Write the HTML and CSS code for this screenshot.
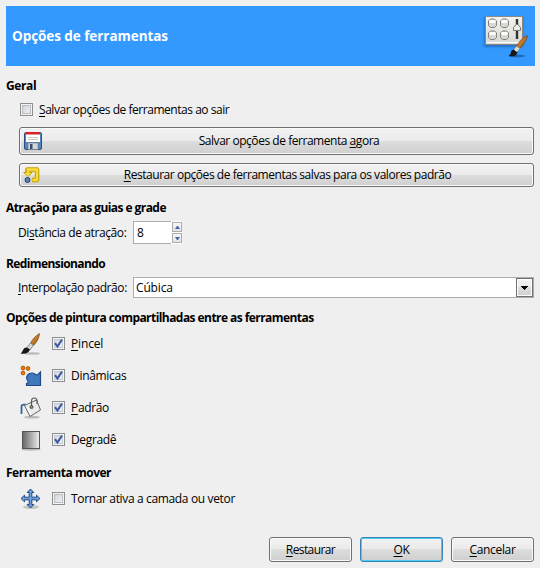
FILE: index.html
```html
<!DOCTYPE html>
<html lang="pt-BR">
<head>
<meta charset="utf-8">
<title>Opções de ferramentas</title>
<link rel="stylesheet" href="styles.css">
</head>
<body>
<main class="dialog">
  <header class="banner">
    <h1>Opções de ferramentas</h1>
    <svg class="banner-icon" width="48" height="48" viewBox="0 0 48 48">
      <defs>
        <linearGradient id="panel" x1="0" y1="0" x2="0" y2="1"><stop offset="0" stop-color="#f4f4f1"/><stop offset="1" stop-color="#d6d7d2"/></linearGradient>
        <linearGradient id="wood" x1="0" y1="0" x2="1" y2="1"><stop offset="0" stop-color="#f0a94e"/><stop offset="1" stop-color="#8f4a08"/></linearGradient>
        <filter id="soft"><feGaussianBlur stdDeviation="1"/></filter>
      </defs>
      <rect x="4" y="5" width="39" height="30" fill="#124b8b" opacity=".5" filter="url(#soft)"/>
      <rect x="5.500" y="4.500" width="37" height="28" fill="url(#panel)" stroke="#888a85"/>
      <path d="M6.500 30.500h35" stroke="#fff"/>
      <g fill="#d8d8d3" stroke="#80827c">
        <path d="M8.500 9l2-2h4l2 2v4.500l-2 2h-4l-2-2z"/>
        <path d="M20.500 9l2-2h4l2 2v4.500l-2 2h-4l-2-2z"/>
        <path d="M8.500 21l2-2h4l2 2v4.500l-2 2h-4l-2-2z"/>
        <path d="M20.500 21l2-2h4l2 2v4.500l-2 2h-4l-2-2z"/>
      </g>
      <path d="M9.500 9.500h6M21.500 9.500h6M9.500 21.500h6M21.500 21.500h6" stroke="#fff" stroke-width="3"/>
      <path d="M37 7v20" stroke="#303331" stroke-width="2.400"/>
      <path d="M33.500 18.500v-3l2.500-3h2l2.500 3v3z" fill="#eeeeec" stroke="#777973"/>
      <ellipse cx="37" cy="44" rx="8" ry="1.500" fill="#124b8b" opacity=".6"/>
      <path d="M47.500 23.500c-5 2-9 7-11 11l3 2c4-4 7-8 8-13z" fill="url(#wood)" stroke="#80430a" stroke-width=".8"/>
      <path d="M36.500 34l-3 4 3 2.500 3.500-4z" fill="#dfdfdc" stroke="#777" stroke-width=".7"/>
      <path d="M33.500 37.500c-4 1-1 4-5 6.500 5 1 8 0 9-3.500z" fill="#141716"/>
    </svg>
  </header>

  <h2 class="t-geral">Geral</h2>
  <label class="check-row check-top"><span class="box"></span><span class="t-save"><u>S</u>alvar opções de ferramentas ao sair</span></label>
  <button class="wide wide-save">
    <svg class="btn-icon" width="20" height="20" viewBox="0 0 20 20">
      <rect x="1.500" y="1.500" width="17" height="17" rx="1.500" fill="#5585c0" stroke="#2c4f83"/>
      <rect x="3" y="1" width="14" height="10" fill="#fff"/>
      <rect x="3" y="1" width="14" height="2.500" fill="#dc2028"/>
      <path d="M5 6.500h10M5 8.500h10" stroke="#c4c4c4"/>
      <rect x="5" y="12" width="10" height="6.500" fill="#d3d7cf" stroke="#6d7784" stroke-width=".6"/>
      <rect x="7" y="13" width="2.500" height="5" fill="#35506f"/>
    </svg>
    <span class="t-now">Salvar opções de ferramenta <u>a</u>gora</span>
  </button>
  <button class="wide wide-reset">
    <svg class="btn-icon" width="20" height="20" viewBox="0 0 20 20">
      <path d="M4.500 8V4.500h9.500v10.500H9" fill="none" stroke="#c4a000" stroke-width="4.600" stroke-linejoin="round"/>
      <path d="M.7 7.500h8.600L5 11.500z" fill="#fce94f" stroke="#c4a000" stroke-linejoin="round"/>
      <path d="M5 9V4.500h9V15H9.500" fill="none" stroke="#f7dc3e" stroke-width="2.400"/>
      <circle cx="4.500" cy="15" r="2.500" fill="#5b82b8" stroke="#253f6b"/>
    </svg>
    <span class="t-reset"><u>R</u>estaurar opções de ferramentas salvas para os valores padrão</span>
  </button>

  <h2 class="t-snap">Atração para as guias e grade</h2>
  <div class="field spin-row">
    <span class="label t-dist">Di<u>s</u>tância de atração:</span>
    <span class="spin"><span class="spin-value">8</span><span class="spin-buttons">
      <span class="step"><svg width="5" height="3" viewBox="0 0 5 3"><path d="M0 3L2 0h1l2 3z" fill="#4a63a6"/></svg></span>
      <span class="step"><svg width="5" height="3" viewBox="0 0 5 3"><path d="M0 0h5L3 3H2z" fill="#4a63a6"/></svg></span>
    </span></span>
  </div>

  <h2 class="t-resize">Redimensionando</h2>
  <div class="field combo-row">
    <span class="label t-interp"><u>I</u>nterpolação padrão:</span>
    <span class="combo"><span class="t-cubic">Cúbica</span><span class="drop"><svg width="7" height="4" viewBox="0 0 7 4" shape-rendering="crispEdges"><path d="M0 0h7v1H6v1H5v1H4v1H3V3H2V2H1V1H0z"/></svg></span></span>
  </div>

  <h2 class="t-paint">Opções de pintura compartilhadas entre as ferramentas</h2>
  <label class="tool-row">
    <svg class="tool-icon" width="22" height="22" viewBox="0 0 22 22">
      <ellipse cx="12" cy="20.500" rx="8" ry="1.300" fill="#888" opacity=".5"/>
      <path d="M19.500.5C15 3 12 7 10.500 10.500l3 2C17 9 19 5 19.500.5z" fill="url(#wood)" stroke="#80430a" stroke-width=".7"/>
      <path d="M10.500 10l-3.500 4.500 3 2.500 3.500-5z" fill="#d6d7d5" stroke="#666" stroke-width=".7"/>
      <path d="M6.500 14.500c-4 .5-3 4-6 6 4 1 8 0 9.500-4z" fill="#141716"/>
    </svg>
    <span class="box checked"><svg width="9" height="9" viewBox="0 0 9 9"><path d="M1 4.200l2.500 3.300L8 .5" fill="none" stroke="#3b57a2" stroke-width="2"/></svg></span><span class="t-pincel"><u>P</u>incel</span>
  </label>
  <label class="tool-row">
    <svg class="tool-icon" width="22" height="22" viewBox="0 0 22 22">
      <path d="M6.500 20.500v-2c2.500-.5 2-1.500.5-4-1.500-3 1-6.500 5-6.500 3 0 4 3 6 1.500L20.500 7v13.500z" fill="#3f78bd" stroke="#204a87" stroke-width="1.200"/>
      <g fill="#f57900" stroke="#9b4a06" stroke-width=".8"><circle cx="3" cy="3" r="1.900"/><circle cx="8" cy="3.500" r="1.900"/><circle cx="3" cy="8" r="1.900"/></g>
    </svg>
    <span class="box checked"><svg width="9" height="9" viewBox="0 0 9 9"><path d="M1 4.200l2.500 3.300L8 .5" fill="none" stroke="#3b57a2" stroke-width="2"/></svg></span><span class="t-din">Dinâmicas</span>
  </label>
  <label class="tool-row">
    <svg class="tool-icon" width="22" height="22" viewBox="0 0 22 22">
      <ellipse cx="12" cy="20.200" rx="8" ry="1.400" fill="#888" opacity=".5"/>
      <path d="M1.500 17V9c0-1 2-1.500 4-1.500" fill="none" stroke="#3465a4" stroke-width="1.800"/>
      <path d="M4.500 8.500l12-5.500 4 10-10.500 6.500z" fill="#ececea" stroke="#656762" stroke-linejoin="round"/>
      <path d="M6.500 9.500l4.500 8" stroke="#fff"/>
      <path d="M11.500 9.500V4c0-4 5.500-4 5.500 0v3" fill="none" stroke="#555753" stroke-width="1.100"/>
      <circle cx="11.500" cy="10" r="1.600" fill="#888" stroke="#444" stroke-width=".8"/>
    </svg>
    <span class="box checked"><svg width="9" height="9" viewBox="0 0 9 9"><path d="M1 4.200l2.500 3.300L8 .5" fill="none" stroke="#3b57a2" stroke-width="2"/></svg></span><span class="t-padrao"><u>P</u>adrão</span>
  </label>
  <label class="tool-row">
    <svg class="tool-icon" width="22" height="22" viewBox="0 0 22 22">
      <defs><linearGradient id="grad"><stop offset="0" stop-color="#666"/><stop offset="1" stop-color="#eee"/></linearGradient></defs>
      <ellipse cx="11" cy="20.500" rx="10" ry="1.200" fill="#888" opacity=".5"/>
      <rect x="2.500" y="2.500" width="17" height="17" fill="url(#grad)" stroke="#555753"/>
    </svg>
    <span class="box checked"><svg width="9" height="9" viewBox="0 0 9 9"><path d="M1 4.200l2.500 3.300L8 .5" fill="none" stroke="#3b57a2" stroke-width="2"/></svg></span><span class="t-degrade">Degradê</span>
  </label>

  <h2 class="t-move">Ferramenta mover</h2>
  <label class="tool-row">
    <svg class="tool-icon" width="22" height="22" viewBox="0 0 22 22">
      <ellipse cx="11" cy="19" rx="8" ry="2" fill="#888" opacity=".4"/>
      <path d="M10.500 1l3.300 3.500h-2v4.700h4.700v-2L20 10.500l-3.500 3.300v-2h-4.700v4.700h2L10.500 20l-3.300-3.500h2v-4.700H4.500v2L1 10.500l3.500-3.300v2h4.700V4.500h-2z" fill="#6f9fd6" stroke="#204a87" stroke-linejoin="round"/>
    </svg>
    <span class="box"></span><span class="t-tornar">Tornar ativa a camada ou vetor</span>
  </label>

  <footer class="actions">
    <button class="action"><span class="t-restore"><u>R</u>estaurar</span></button>
    <button class="action default"><span><u>O</u>K</span></button>
    <button class="action"><span><u>C</u>ancelar</span></button>
  </footer>
</main>
</body>
</html>
```
FILE: styles.css
```css
* { box-sizing: border-box; }
body {
  margin: 0;
  background: #efefef;
  color: #000;
  font: 12px/16px "Open Sans", "Noto Sans", sans-serif;
  letter-spacing: -0.35px;
}
.dialog { height: 568px; padding: 6px 6px 0; overflow: hidden; }
u { text-decoration: underline; text-underline-offset: 2px; text-decoration-thickness: 1px; text-decoration-skip-ink: none; }
svg { display: block; flex: none; }
span { white-space: nowrap; }

.banner {
  display: flex;
  align-items: center;
  justify-content: space-between;
  width: 529px;
  height: 60px;
  padding: 0 6px;
  background: #3399ff;
  color: #fff;
}
h1 { margin: 0; font-size: 13.5px; line-height: 18px; font-weight: 700; letter-spacing: -0.06px; white-space: nowrap; }
.banner-icon { margin-right: 1px; }

h2 { height: 16px; margin: 0; font-size: 12px; line-height: 16px; font-weight: 700; letter-spacing: -0.56px; white-space: nowrap; }
.t-geral { margin-top: 12px; letter-spacing: -0.4px; }
.t-snap { margin-top: 13px; }
.t-resize { margin-top: 12px; letter-spacing: -0.6px; }
.t-paint { margin-top: 12px; margin-bottom: 2px; }
.t-move { margin-top: 9px; margin-bottom: 2px; letter-spacing: -0.48px; }
.t-save, .t-now, .t-reset { letter-spacing: -0.46px; }
.t-pincel, .t-cubic { letter-spacing: -0.15px; }
.t-din { letter-spacing: -0.3px; }
.t-restore { letter-spacing: -0.6px; }

.check-row { display: flex; align-items: center; gap: 6px; height: 16px; padding-left: 14px; }
.check-top { margin-top: 8px; }
.box {
  display: flex;
  align-items: center;
  justify-content: center;
  flex: none;
  width: 13px;
  height: 13px;
  border: 1px solid #8e8f8f;
  background: linear-gradient(135deg, #cbcfd5, #f6f6f6);
  box-shadow: inset 0 0 0 1px #f4f4f4, inset 0 0 0 2px #b8bcc3;
}
.check-row .box, .tool-row .box { position: relative; top: -0.5px; }
.box.checked { box-shadow: inset 0 0 0 1px #f4f4f4, inset 0 0 0 2px #c5cad4; }

button {
  position: relative;
  display: flex;
  align-items: center;
  justify-content: center;
  padding: 0;
  border: 1px solid #707070;
  border-radius: 3px;
  background: linear-gradient(#f2f2f2, #ebebeb 48%, #dddddd 50%, #cfcfcf);
  box-shadow: inset 0 0 0 1px #fbfbfb;
  color: #000;
  font: inherit;
  letter-spacing: inherit;
}
.wide { width: 515px; margin-left: 13px; }
.wide-save { height: 28px; margin-top: 9px; padding-left: 25px; }
.wide-reset { height: 24px; margin-top: 8px; padding-left: 22px; }
.btn-icon { position: absolute; left: 3px; top: 50%; transform: translateY(-50%); }

.field { display: flex; align-items: center; padding-left: 12px; margin-top: 5px; }
.label { width: 115px; flex: none; letter-spacing: -0.4px; }
.spin-row { height: 23px; }
.spin { display: flex; width: 49px; height: 23px; }
.spin-value { width: 38px; padding: 3px 0 0 3px; border: 1px solid #abadb3; border-right: 0; background: #fff; }
.spin-buttons { display: flex; flex-direction: column; justify-content: space-between; width: 11px; padding: 1px 0 1px 1px; background: #fff; }
.step { display: flex; align-items: center; justify-content: center; height: 10px; border: 1px solid #abadb3; background: linear-gradient(#f7f7f7, #e2e2e6); }
.combo-row { height: 21px; }
.combo { display: flex; align-items: center; justify-content: space-between; width: 402px; height: 21px; padding-left: 2px; border: 1px solid #abadb3; background: #fff; }
.drop { display: flex; align-items: center; justify-content: center; width: 17px; height: 19px; border: 1px solid #707070; background: linear-gradient(#f2f2f2, #ebebeb 48%, #dddddd 50%, #cfcfcf); box-shadow: inset 0 0 0 1px #fff; }

.tool-row { display: flex; align-items: center; height: 32px; padding-left: 14px; }
.tool-icon { width: 22px; margin-right: 10px; }
.tool-row .box { margin-right: 6px; }

.actions { display: flex; justify-content: flex-end; gap: 8px; margin-top: 22px; }
.action { width: 83px; height: 25px; }
.default { border-color: #3c7fb1; box-shadow: inset 0 0 0 1px #48cdf5; }
```
